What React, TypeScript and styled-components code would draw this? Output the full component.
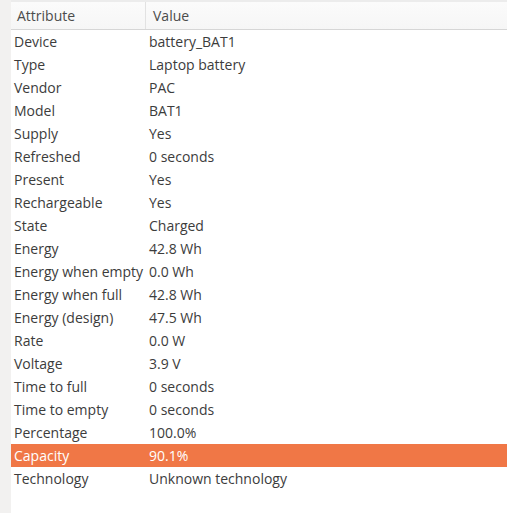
import React from "react";
import styled, { createGlobalStyle } from "styled-components";

const Global = createGlobalStyle`
  html, body { margin: 0; padding: 0; background: #f2f1f0; }
  body { font-family: "Open Sans", "DejaVu Sans", sans-serif; }
`;

const Page = styled.div`
  width: 507px;
  height: 513px;
  display: flex;
  background: #f2f1f0;
  overflow: hidden;
`;

const Table = styled.div`
  margin-left: 11px;
  flex: 1;
  background: #ffffff;
  display: flex;
  flex-direction: column;
`;

const Header = styled.div`
  display: grid;
  grid-template-columns: 134px 1fr;
  height: 27px;
  margin-top: 2px;
  border-bottom: 1px solid #d6d6d6;
  background: linear-gradient(#fbfbfb, #f6f6f6);
  box-shadow: 0 -2px 0 #ececec;
`;

const HeadCell = styled.div<{ $divider?: boolean }>`
  display: flex;
  align-items: center;
  padding-left: ${(p) => (p.$divider ? "7px" : "6px")};
  border-left: ${(p) => (p.$divider ? "1px solid #e2e2e2" : "none")};
  font-size: 14px;
  color: #4c4c4c;
`;

const Row = styled.div<{ $selected?: boolean }>`
  display: grid;
  grid-template-columns: 134px 1fr;
  height: 23px;
  align-items: center;
  background: ${(p) => (p.$selected ? "#f07746" : "transparent")};
  color: ${(p) => (p.$selected ? "#ffffff" : "#3c3c3c")};
  font-size: 14px;
`;

const Cell = styled.div<{ $value?: boolean }>`
  padding-left: ${(p) => (p.$value ? "4px" : "3px")};
  white-space: nowrap;
  overflow: visible;
`;

const rows: [string, string][] = [
  ["Device", "battery_BAT1"],
  ["Type", "Laptop battery"],
  ["Vendor", "PAC"],
  ["Model", "BAT1"],
  ["Supply", "Yes"],
  ["Refreshed", "0 seconds"],
  ["Present", "Yes"],
  ["Rechargeable", "Yes"],
  ["State", "Charged"],
  ["Energy", "42.8 Wh"],
  ["Energy when empty", "0.0 Wh"],
  ["Energy when full", "42.8 Wh"],
  ["Energy (design)", "47.5 Wh"],
  ["Rate", "0.0 W"],
  ["Voltage", "3.9 V"],
  ["Time to full", "0 seconds"],
  ["Time to empty", "0 seconds"],
  ["Percentage", "100.0%"],
  ["Capacity", "90.1%"],
  ["Technology", "Unknown technology"],
];

export default function App() {
  return (
    <>
      <Global />
      <Page>
        <Table>
          <Header>
            <HeadCell>Attribute</HeadCell>
            <HeadCell $divider>Value</HeadCell>
          </Header>
          {rows.map(([k, v]) => (
            <Row key={k} $selected={k === "Capacity"}>
              <Cell>{k}</Cell>
              <Cell $value>{v}</Cell>
            </Row>
          ))}
        </Table>
      </Page>
    </>
  );
}
